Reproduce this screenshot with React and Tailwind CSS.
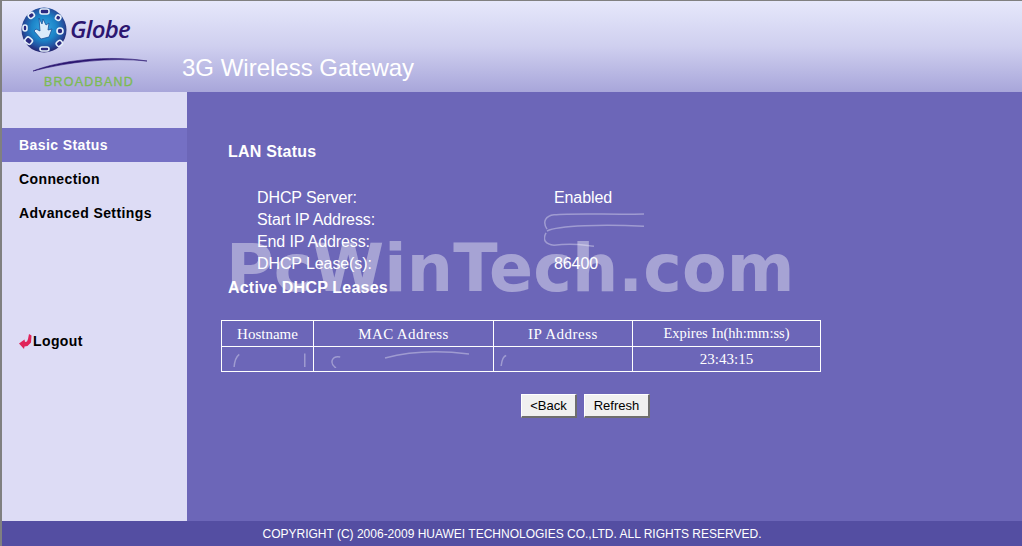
const arial = "font-['Liberation_Sans',Arial,sans-serif]";

function GlobeLogo() {
  return (
    <svg width="46" height="46" viewBox="0 0 46 46" className="block">
      <defs>
        <radialGradient id="ball" cx="50%" cy="45%" r="55%">
          <stop offset="0%" stopColor="#38a8e2" />
          <stop offset="50%" stopColor="#1c84c8" />
          <stop offset="80%" stopColor="#24509f" />
          <stop offset="100%" stopColor="#26246f" />
        </radialGradient>
      </defs>
      <circle cx="23" cy="23" r="22.5" fill="url(#ball)" />
      <g fill="#2b2a80" stroke="#e6f0fa" strokeWidth="1.6">
        <rect x="19" y="2" width="9" height="5" rx="2" />
        <rect x="7" y="6" width="6" height="5" rx="2" transform="rotate(-35 10 8)" />
        <rect x="35" y="8" width="5" height="5" rx="2" transform="rotate(30 37 10)" />
        <rect x="2" y="18" width="4" height="6" rx="2" />
        <circle cx="39" cy="24" r="3" />
        <rect x="35" y="34" width="6" height="5" rx="2" transform="rotate(-40 38 36)" />
        <rect x="4" y="31" width="7" height="6" rx="2" transform="rotate(40 8 34)" />
        <rect x="19" y="40" width="9" height="4" rx="2" />
      </g>
      <path d="M18 11l3 6 1-5 3 6 3-2-1 7 4-1-3 8-8 2-7-8 2-2 4 2z" fill="#d9ecfa" stroke="#16529a" strokeWidth="0.8" />
    </svg>
  );
}

function Swoosh() {
  return (
    <svg width="116" height="16" viewBox="0 0 116 16" className="block">
      <path d="M0 15C28 4 76-1 114 5 78 1 34 6 0 15Z" fill="#2a1570" stroke="#2a1570" strokeWidth="0.6" />
    </svg>
  );
}

function LogoutArrow() {
  return (
    <svg width="14" height="15" viewBox="0 0 14 15" className="block shrink-0">
      <path d="M10 0l2.500 1.500-.5 7-3.500 3.500-3 .5L5 15 0 9.500 5.500 5.500 6 8l2-.5L9 5z" fill="#e0245a" />
    </svg>
  );
}

function Scribble({ className, d }) {
  return (
    <svg className={className} viewBox="0 0 100 40" preserveAspectRatio="none" fill="none">
      <path d={d} stroke="#ffffff" strokeOpacity="0.35" strokeWidth="1.5" vectorEffect="non-scaling-stroke" />
    </svg>
  );
}

function InfoRow({ label, value }) {
  return (
    <div className="flex h-[22px] items-center text-[16px] leading-[22px] tracking-[-0.1px]">
      <div className="w-[297px]">{label}</div>
      <div>{value}</div>
    </div>
  );
}

function NavItem({ children, active }) {
  return (
    <div className={`flex h-[34px] items-center pl-[17px] text-[14px] font-bold tracking-[0.4px] ${active ? "bg-[#7570c4] text-white" : "text-black"}`}>
      {children}
    </div>
  );
}

export default function App() {
  return (
    <div className={`${arial} flex h-[546px] w-[1022px] flex-col overflow-hidden border-t border-l-2 border-[#808080] bg-[#6c66b8]`}>
      <header className="flex h-[91px] shrink-0 bg-gradient-to-b from-[#e6e8fb] via-[#cfcfef] to-[#a8a6da]">
        <div className="w-[180px] shrink-0 pt-[6px]">
          <div className="flex items-start pl-[19px]">
            <GlobeLogo />
            <div className="ml-[3px] mt-[7px] font-['Open_Sans',sans-serif] text-[24px] leading-[30px] font-semibold tracking-[-0.7px] text-[#2c1670] italic">Globe</div>
          </div>
          <div className="mt-[3px] pl-[31px]">
            <Swoosh />
          </div>
          <div className="mt-[3px] pl-[42px] text-[12.5px] leading-[14px] font-medium tracking-[1.2px] text-[#7cbb52] [-webkit-text-stroke:0.3px_#7cbb52]">BROADBAND</div>
        </div>
        <div className="pt-[53px] text-[24px] leading-[28px] text-white">3G Wireless Gateway</div>
      </header>

      <div className="flex min-h-0 flex-1">
        <aside className="flex w-[185px] shrink-0 flex-col bg-[#dddcf5] pt-[36px]">
          <NavItem active>Basic Status</NavItem>
          <NavItem>Connection</NavItem>
          <NavItem>Advanced Settings</NavItem>
          <div className="mt-[94px] flex h-[34px] items-center pl-[17px] text-[14px] font-bold tracking-[0.4px] text-black">
            <LogoutArrow />
            <span>Logout</span>
          </div>
        </aside>

        <main className="relative flex-1 pl-[41px] text-white">
          <h1 className="pt-[51px] text-[16px] leading-[18px] font-bold tracking-[0.2px]">LAN Status</h1>
          <div className="mt-[26px] pl-[29px]">
            <InfoRow label="DHCP Server:" value="Enabled" />
            <InfoRow label="Start IP Address:" value="" />
            <InfoRow label="End IP Address:" value="" />
            <InfoRow label="DHCP Lease(s):" value="86400" />
          </div>
          <h2 className="mt-[4px] text-[16px] leading-[18px] font-bold tracking-[0.2px]">Active DHCP Leases</h2>

          <table className="mt-[23px] ml-[-7px] w-[600px] table-fixed border-collapse font-['Liberation_Serif','Times_New_Roman',serif] text-[15px] text-white">
            <tbody>
              <tr className="h-[26px] text-center">
                <td className="w-[92px] border border-white p-0 pt-[1px]">Hostname</td>
                <td className="w-[180px] border border-white p-0 pt-[1px] tracking-[0.4px]">MAC Address</td>
                <td className="w-[139px] border border-white p-0 pt-[1px] tracking-[0.5px]">IP Address</td>
                <td className="border border-white p-0 pt-[1px] text-[14.5px]">Expires In(hh:mm:ss)</td>
              </tr>
              <tr className="h-[25px] text-center">
                <td className="border border-white p-0"></td>
                <td className="border border-white p-0"></td>
                <td className="border border-white p-0"></td>
                <td className="border border-white p-0">23:43:15</td>
              </tr>
            </tbody>
          </table>

          <div className="mt-[22px] ml-[293px] flex gap-[7px] text-[13px] text-black">
            <button className="h-[24px] w-[56px] border-t border-l border-t-white border-l-white border-r-2 border-b-2 border-r-[#6e6e6e] border-b-[#6e6e6e] bg-[#f0f0f0]">&lt;Back</button>
            <button className="h-[24px] w-[66px] border-t border-l border-t-white border-l-white border-r-2 border-b-2 border-r-[#6e6e6e] border-b-[#6e6e6e] bg-[#f0f0f0]">Refresh</button>
          </div>

          {/* blurred out values */}
          <Scribble className="absolute top-[120px] left-[357px] h-[38px] w-[100px]" d="M3 18C-2 10 2 4 10 3C30 1 70 3 100 2M3 20C14 14 60 13 100 15M2 22C-2 30 2 34 10 35C30 32 40 35 50 36" />
          <Scribble className="absolute top-[257px] left-[46px] h-[18px] w-[78px]" d="M2 70C0 40 2 20 8 12M92 10V80" />
          <Scribble className="absolute top-[256px] left-[142px] h-[20px] w-[140px]" d="M5 40C0 30 2 15 8 18M5 42C30 60 60 50 90 70M40 20C60 5 80 5 100 12" />
          <Scribble className="absolute top-[262px] left-[312px] h-[12px] w-[8px]" d="M90 5C20 10 10 60 40 95" />

          {/* watermark */}
          <div className="pointer-events-none absolute top-[139px] left-[39px] font-['DejaVu_Sans',sans-serif] text-[65px] leading-[76px] font-bold tracking-[0.15px] whitespace-nowrap text-white/40">PcWinTech.com</div>
        </main>
      </div>

      <footer className="flex h-[25px] shrink-0 items-center justify-center bg-[#544ea2] text-[12px] text-white">
        COPYRIGHT (C) 2006-2009 HUAWEI TECHNOLOGIES CO.,LTD. ALL RIGHTS RESERVED.
      </footer>
    </div>
  );
}
